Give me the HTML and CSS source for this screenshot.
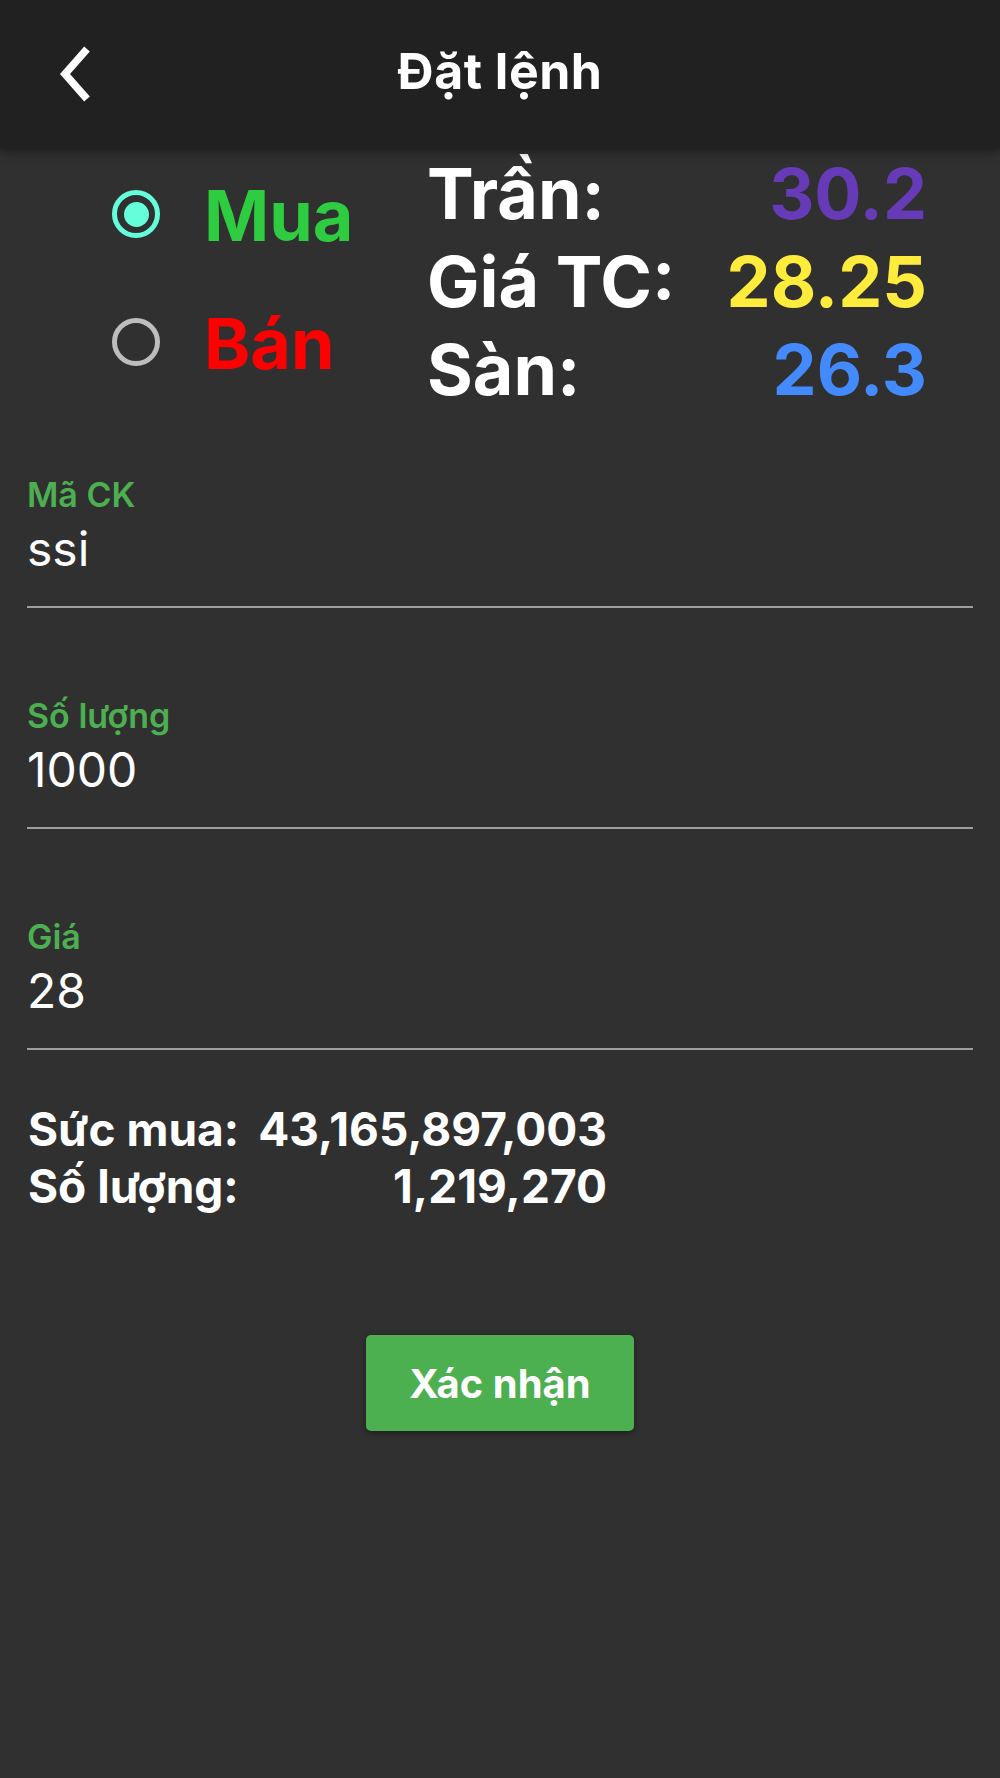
FILE: index.html
```html
<!DOCTYPE html>
<html lang="vi">
<head>
  <meta charset="UTF-8" />
  <meta name="viewport" content="width=device-width, initial-scale=1" />
  <title>Đặt lệnh</title>
  <link rel="stylesheet" href="styles.css">
</head>
<body>
  <header class="topbar">
    <button class="back" aria-label="Quay lại">
      <svg width="40" height="60" viewBox="0 0 40 60">
        <polyline points="30,5 8,30 30,55" fill="none" stroke="#fff" stroke-width="7.5" stroke-linejoin="miter" stroke-linecap="butt" />
      </svg>
    </button>
    <h1 class="title">Đặt lệnh</h1>
    <span></span>
  </header>

  <main class="order">
    <section class="summary">
      <div class="sides">
        <label class="side">
          <span class="radio radio--on"></span>
          <span class="side-name side-name--buy">Mua</span>
        </label>
        <label class="side">
          <span class="radio"></span>
          <span class="side-name side-name--sell">Bán</span>
        </label>
      </div>

      <div class="prices">
        <span class="price-label">Trần:</span>
        <span class="price-value ceil">30.2</span>
        <span class="price-label">Giá TC:</span>
        <span class="price-value ref">28.25</span>
        <span class="price-label">Sàn:</span>
        <span class="price-value floor">26.3</span>
      </div>
    </section>

    <div class="fields">
      <div class="field">
        <div class="field-label">Mã CK</div>
        <div class="field-value">ssi</div>
      </div>
      <div class="field">
        <div class="field-label">Số lượng</div>
        <div class="field-value">1000</div>
      </div>
      <div class="field">
        <div class="field-label">Giá</div>
        <div class="field-value">28</div>
      </div>
    </div>

    <div class="balance">
      <span>Sức mua:</span>
      <span class="num">43,165,897,003</span>
      <span>Số lượng:</span>
      <span class="num">1,219,270</span>
    </div>

    <div class="actions">
      <button class="confirm">Xác nhận</button>
    </div>
  </main>
</body>
</html>
```

FILE: styles.css
```css
body {
  margin: 0;
  min-height: 1778px;
  background: #303030;
  color: #fff;
  font-family: Inter, 'Liberation Sans', sans-serif;
}

.topbar {
  position: relative;
  z-index: 2;
  height: 148px;
  background: #212121;
  box-shadow: 0 3px 10px rgba(0, 0, 0, 0.45);
  display: grid;
  grid-template-columns: 1fr auto 1fr;
  align-items: center;
}

.back {
  justify-self: start;
  margin-left: 57px;
  padding: 0;
  border: none;
  background: none;
  display: flex;
}

.title {
  margin: 0 0 6px;
  font-size: 50px;
  font-weight: 700;
  letter-spacing: 0.5px;
}

.summary {
  display: flex;
  padding-top: 2px;
}

.sides {
  width: 315px;
  padding-left: 112px;
}

.side {
  height: 128px;
  display: flex;
  align-items: center;
  gap: 44px;
}

.radio {
  width: 48px;
  height: 48px;
  box-sizing: border-box;
  border: 5px solid #bdbdbd;
  border-radius: 50%;
  display: flex;
  align-items: center;
  justify-content: center;
}

.radio--on {
  border-color: #64ffda;
}

.radio--on::after {
  content: "";
  width: 25px;
  height: 25px;
  border-radius: 50%;
  background: #64ffda;
}

.side-name {
  font-size: 70px;
  font-weight: 700;
  line-height: 1;
  margin-top: 4px;
}

.side-name--buy { color: #2ecc40; }
.side-name--sell { color: #ff0000; }

.prices {
  width: 500px;
  display: grid;
  grid-template-columns: auto 1fr;
  font-size: 70px;
  font-weight: 700;
  line-height: 88px;
}

.price-value { text-align: right; }
.ceil { color: #673ab7; }
.ref { color: #ffeb3b; }
.floor { color: #448aff; }

.fields {
  margin-top: 59px;
  padding: 0 27px;
  display: flex;
  flex-direction: column;
  gap: 86px;
}

.field {
  padding-bottom: 25px;
  border-bottom: 2px solid #9e9e9e;
}

.field-label {
  color: #4caf50;
  font-size: 34px;
  font-weight: 600;
  line-height: 44px;
}

.field-value {
  font-size: 48px;
  line-height: 64px;
}

.balance {
  margin-top: 51px;
  padding-left: 28px;
  display: grid;
  grid-template-columns: auto auto;
  justify-content: start;
  column-gap: 19px;
  font-size: 46px;
  font-weight: 700;
  line-height: 57px;
}

.balance .num { text-align: right; }

.actions {
  margin-top: 120px;
  display: flex;
  justify-content: center;
}

.confirm {
  width: 268px;
  height: 96px;
  border: none;
  border-radius: 5px;
  background: #4caf50;
  color: #fff;
  font-family: inherit;
  font-size: 40px;
  font-weight: 700;
  box-shadow: 0 2px 6px rgba(0, 0, 0, 0.4);
}
```
